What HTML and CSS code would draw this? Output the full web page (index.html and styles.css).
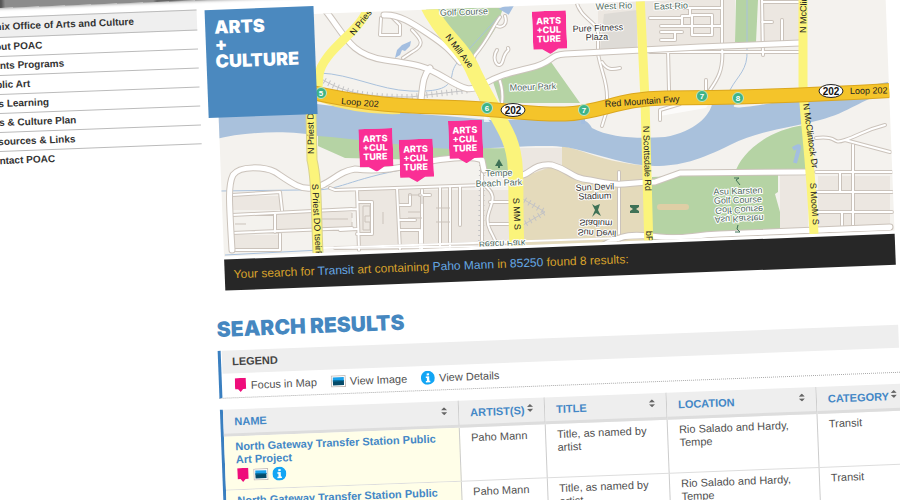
FILE: index.html
```html
<!DOCTYPE html>
<html lang="en">
<head>
<meta charset="utf-8">
<title>Arts + Culture</title>
<link rel="stylesheet" href="styles.css">
</head>
<body>
<svg class="sprite" aria-hidden="true">
  <symbol id="i-pin" viewBox="0 0 12 14"><path fill="#ef0d7b" d="M0 0H11V11H8L5.500 14 3 11H0Z"/></symbol>
  <symbol id="i-image" viewBox="0 0 15 12"><path fill="#fff" stroke="#c4bcb8" d="M.5.5h14v11H.5z"/><path fill="#1aa0ea" d="M2 2h11v4H2z"/><path fill="#064a68" d="M2 5h11v5H2z"/><path fill="#0877ab" d="M2 5h11v1H2z"/></symbol>
  <symbol id="i-info" viewBox="0 0 14 14"><circle cx="7" cy="7" r="7" fill="#12a5f4"/><path fill="#fff" d="M6 2.500h2.400v2H6zM5 5.500h3.400v4.500h1v1.500H4.900V10H6V7H5z"/></symbol>
  <symbol id="i-sort" viewBox="0 0 6 8"><path fill="#666" d="M0 3 3 0l3 3zM0 5h6L3 8z"/></symbol>
</svg>
<div class="page">
  <header class="banner"></header>
  <nav class="sidebar">
    <a class="current" href="#">Phoenix Office of Arts and Culture</a>
    <a href="#">About POAC</a>
    <a href="#">Grants Programs</a>
    <a href="#">Public Art</a>
    <a href="#">Arts Learning</a>
    <a href="#">Arts &amp; Culture Plan</a>
    <a href="#">Resources &amp; Links</a>
    <a href="#">Contact POAC</a>
  </nav>
  <main class="main">
    <section class="map">
      <svg class="map-art" viewBox="0 0 671 239" role="img" aria-label="Street map">
        <defs>
          <g id="streets">
            <path d="M325 10C345 35 350 55 385 60S425 66 445 78S470 92 484 84S505 74 530 68S548 55 565 54L700 47L800 43"/>
            <path d="M421 100C423 80 424 75 430 68M384 15C400 14 415 25 430 35S450 50 460 62"/>
            <path d="M232 250C229 200 228 185 233 175C240 165 265 167 275 172C290 182 300 190 312 188C330 186 335 172 355 169C385 173 410 165 425 162S470 155 482 160L484 170"/>
            <path d="M516 175C530 178 530 163 552 165C570 170 570 178 590 180C625 188 625 182 655 182L680 173L805 172"/>
            <path d="M600 247C630 230 640 236 660 237C685 240 690 235 720 234L890 227"/>
            <path d="M323 248L890 229" stroke-width="2"/>
          </g>
          <g id="lanes">
            <path d="M576 0C580 20 600 22 598 35V52M598 54C602 75 607 80 607 97V110L602 126M602 62C607 70 612 70 620 68M498 76C502 85 503 95 502 103"/>
            <path d="M722 0V48C724 70 717 80 710 90M668 50L669 90M650 52H800M762 0L763 55M762 22H772M763 2H800M782 20V42"/>
            <path d="M661 8H722M661 26H722M661 40H675V32H661M690 8V16H682V26M692 15H712V35H692V15M650 18H682M682 32H668"/>
            <path d="M381 18L380 35H400V25L392 17M412 30C422 40 425 45 412 52L403 58M500 17C492 28 488 40 475 55L470 68M505 16C508 25 502 28 497 26M497 50C490 60 500 72 503 60S510 52 508 48"/>
            <path d="M232 195L280 192L282 210M232 215L352 209M232 233L352 228M275 214V232M232 250L280 250V234M330 188L335 190L484 185M357 190L359 250M335 210L357 209M340 230L357 229M397 188L400 250M358 202H372V234H357M400 205H410V195M400 220H415M400 230H420V248"/>
            <path d="M422 190V249M440 188V250M430 195H420M450 188V248M460 187V225M482 168V248M484 185C505 200 480 210 490 230S500 248 490 250M490 202H516M490 224H516M335 248L510 246"/>
            <path d="M816 138C840 135 830 145 845 140S865 130 885 125M845 140L890 152M853 145V228M816 172H892M817 192H892M817 212H892M840 172V192M842 212V230"/>
            <path d="M619 172V242M660 110L680 104M660 110V120M706 90V80"/>
          </g>
        </defs>
        <g transform="translate(-214 -26) rotate(2.200)">
          <path fill="#f4f2ee" d="M200-30H920V270H200z"/>
          <path fill="#ece7e1" d="M598 0H665V48H598zM660 0H735V45H660zM760 0H800V42H760zM233 196H280V210H233zM275 212H352V230H275zM358 190H516V250H358zM234 235H280V250H234zM518 148H562V172H518zM780 176H808V232H780zM818 176H890V230H818z"/>
          <path fill="#dedbd6" d="M604 14 637 10V48L600 50z"/>
          <path fill="#e4dabb" d="M562 146C585 150 600 162 650 166V250H514L518 178C540 172 550 165 562 166z"/>
          <path fill="#b5d3a4" d="M425 8H503L499 20C492 40 475 55 462 62zM493 82 551 62 580 103H500zM736 0H758L756 42H735zM735 173C740 155 765 130 805 125L807 173zM652 177 778 172V192L775 194 780 212V232L650 240zM318 135C360 135 450 150 505 148L516 178 484 170 482 158 430 160 345 158 318 146z"/>
          <path fill="#a9c1dc" d="M205 110 317 104C380 112 430 114 490 120L570 119C578 116 588 120 592 128C610 138 640 139 665 137C695 132 710 115 712 104H735C730 109 740 108 760 105L888 82V92C860 100 850 112 820 120S760 130 730 145S680 166 655 166C630 166 600 155 575 149S520 148 450 149C400 146 360 139 318 136C290 130 240 131 205 142z"/>
          <path fill="#fff" opacity=".7" d="M484 113 490 122 484 122zM660 107 710 102 706 108 660 116z"/>
          <path class="brook" d="M320 73C350 74 380 90 410 91S450 88 452 75 460 60 500 15M747 0V50C748 70 738 75 730 90M220 191 300 190C340 192 340 182 400 170M225 255 320 250"/>
          <path fill="#a3bee0" d="M395 58 397 50 402 45 411 41 410 46 405 51 402 50 400 55z"/>
          <path class="pond" d="M503 9 512 5 508 12zM793 149Q800 144 799 148T795 163M583 119V124"/>
          <path class="rail" d="M320 78C345 94 370 97 410 97L470 90M476 90 484 110M482 165 481 250M516 195 545 212 518 228"/>
          <path class="rail rail-ties" d="M320 78C345 94 370 97 410 97L470 90M482 165 481 250M516 195 545 212 518 228"/>
          <use href="#lanes" class="lane-case"/><use href="#lanes" class="lane"/>
          <use href="#streets" class="street-case"/><use href="#streets" class="street"/>
          <path class="blocks" d="M365 206H370V216H365V222H370V230H363V206zM383 212V224M408 195H422V204M408 212H420M408 218H422M436 208H450M436 222H450M322 219H348M235 224H246M352 213V218M352 222V226"/>
          <path fill="none" d="M660 207H686" stroke="#dfcea5" stroke-width="6" stroke-linecap="round"/>
          <path class="major-case" d="M311 112 312 160C317 180 316 210 318 253"/>
          <path class="major" d="M368 6C364 30 322 50 319 75L317 100M311 112 312 160C317 180 316 210 318 253M640-5 645 100 649 250M803-5 803 85C804 120 810 150 814 234"/>
          <path class="major wide" d="M424-2C440 35 462 45 472 68S492 105 506 132 514 180 517 250"/>
          <path fill="none" stroke="#fbe470" stroke-width="6" d="M317 98C345 108 370 112 400 111"/>
          <path class="fwy-case" d="M310 92C350 101 385 106 440 107S530 115 565 114 620 98 665 98 780 97 900 90"/>
          <path class="fwy" d="M310 92C350 101 385 106 440 107S530 115 565 114 620 98 665 98 780 97 900 90"/>
          <g class="exit"><circle cx="321" cy="93" r="5.500"/><circle cx="487" cy="108" r="5.500"/><circle cx="584" cy="110" r="5.500"/><circle cx="702" cy="96" r="5.500"/><circle cx="738" cy="98" r="5.500"/></g>
          <g class="exit-no"><text x="321" y="96">5</text><text x="487" y="111">6</text><text x="584" y="113">7</text><text x="702" y="99">7</text><text x="738" y="101">8</text></g>
          <g class="shield"><ellipse cx="513" cy="110" rx="12" ry="6.500"/><ellipse cx="831" cy="91" rx="12" ry="6.500"/></g>
          <g class="shield-no"><text x="513" y="114">202</text><text x="831" y="95">202</text></g>
          <g class="road">
            <text transform="translate(341 104) rotate(5)">Loop 202</text>
            <text transform="translate(605 107) rotate(-4)">Red Mountain Fwy</text>
            <text transform="translate(850 94) rotate(-1)">Loop 202</text>
            <text transform="translate(354 36) rotate(-52)">N Pries</text>
            <text transform="translate(445 37) rotate(53)">N Mill Ave</text>
            <text transform="translate(314 154) rotate(-91)">N Priest Dr</text>
            <text transform="translate(312 184) rotate(87)">S Priest DO tseirP</text>
            <text transform="translate(513 198) rotate(87)">S MM S</text>
            <text transform="translate(643 126) rotate(88)">N Scottsdale Rd</text>
            <text transform="translate(646 231) rotate(88)">bP</text>
            <text transform="translate(806 33) rotate(-89)">N McClintock</text>
            <text transform="translate(803 104) rotate(82)">N McClintock Dr</text>
            <text transform="translate(810 183) rotate(86)">S MooM S</text>
          </g>
          <g class="place">
            <text transform="translate(464 15) rotate(-2)">Golf Course</text>
            <text transform="translate(614 9) rotate(-2)">West Rio</text>
            <text transform="translate(671 9) rotate(-2)">East Rio</text>
            <text transform="translate(533 90) rotate(-2)">Moeur Park</text>
            <g class="dark"><text transform="translate(598 31) rotate(-2)">Pure Fitness</text><text transform="translate(597 40) rotate(-2)">Plaza</text>
            <text transform="translate(595 190) rotate(-2)">Sun Devil</text><text transform="translate(595 199) rotate(-2)">Stadium</text>
            <text transform="translate(596 220) scale(1 -1) rotate(-2)">Stadium</text><text transform="translate(597 230) scale(1 -1) rotate(-2)">Sun Devil</text></g>
            <text transform="translate(499 176) rotate(-2)">Tempe</text><text transform="translate(499 186) rotate(-2)">Beach Park</text>
            <text transform="translate(502 241) scale(1 -1) rotate(2)">Beach Park</text>
            <text transform="translate(738 194) rotate(-2)">Asu Karsten</text><text transform="translate(738 203) rotate(-2)">Golf Course</text>
            <text transform="translate(739 207) scale(1 -1) rotate(2)">Golf Course</text><text transform="translate(739 216) scale(1 -1) rotate(2)">Asu Karsten</text>
          </g>
          <path fill="#3f7257" d="M499 159 495 166H498V168H500V166H503zM592 204 595 206 600 204 598 210 601 216 596 213 592 217 595 210zM630 205H639V207L636 209 639 211V213H630V211L633 209 630 207z"/>
          <path fill="none" stroke="#3f7257" d="M734 178H739L736 180 740 185M735 232H740L737 229 738 225"/>
        </g>
      </svg>
      <a class="pin pin-a" href="#">ARTS<br>+CUL<br>TURE</a>
      <a class="pin pin-b" href="#">ARTS<br>+CUL<br>TURE</a>
      <a class="pin pin-c" href="#">ARTS<br>+CUL<br>TURE</a>
      <a class="pin pin-d" href="#">ARTS<br>+CUL<br>TURE</a>
      <h1 class="badge">ARTS<br>+<br>CULTURE</h1>
    </section>
    <p class="summary">Your search for <a href="#">Transit</a> art containing <a href="#">Paho Mann</a> in <a href="#">85250</a> found 8 results:</p>
    <h2 class="heading">SEARCH RESULTS</h2>
    <section class="legend">
      <h3>LEGEND</h3>
      <ul>
        <li><svg class="pin-icon"><use href="#i-pin"/></svg>Focus in Map</li>
        <li><svg class="image-icon"><use href="#i-image"/></svg>View Image</li>
        <li><svg class="info-icon"><use href="#i-info"/></svg>View Details</li>
      </ul>
    </section>
    <table class="results">
      <colgroup><col class="c-name"><col class="c-artist"><col class="c-title"><col class="c-location"><col class="c-category"></colgroup>
      <thead><tr>
        <th><div>NAME<svg class="sort"><use href="#i-sort"/></svg></div></th>
        <th><div>ARTIST(S)<svg class="sort"><use href="#i-sort"/></svg></div></th>
        <th><div>TITLE<svg class="sort"><use href="#i-sort"/></svg></div></th>
        <th><div>LOCATION<svg class="sort"><use href="#i-sort"/></svg></div></th>
        <th><div>CATEGORY<svg class="sort"><use href="#i-sort"/></svg></div></th>
      </tr></thead>
      <tbody>
        <tr><td><a href="#">North Gateway Transfer Station Public Art Project</a><div class="actions"><svg class="pin-icon"><use href="#i-pin"/></svg><svg class="image-icon"><use href="#i-image"/></svg><svg class="info-icon"><use href="#i-info"/></svg></div></td><td>Paho Mann</td><td>Title, as named by artist</td><td>Rio Salado and Hardy, Tempe</td><td>Transit</td></tr>
        <tr><td><a href="#">North Gateway Transfer Station Public Art Project</a><div class="actions"><svg class="pin-icon"><use href="#i-pin"/></svg><svg class="image-icon"><use href="#i-image"/></svg><svg class="info-icon"><use href="#i-info"/></svg></div></td><td>Paho Mann</td><td>Title, as named by artist</td><td>Rio Salado and Hardy, Tempe</td><td>Transit</td></tr>
      </tbody>
    </table>
  </main>
</div>
</body>
</html>
```
FILE: styles.css
```css
* { box-sizing: border-box; }
html, body { height: 100%; overflow: hidden; }
body { margin: 0; background: #fff; color: #505050; font: 11px/13px "Liberation Sans", Arial, sans-serif; }
a { color: inherit; text-decoration: none; }
h1, h2, h3, p, ul { margin: 0; padding: 0; }
.sprite { position: absolute; width: 0; height: 0; }

/* The whole page is tilted anticlockwise about the window's top-left corner. */
.page {
  display: grid;
  grid-template-columns: 231px 1fr;
  grid-template-rows: 8px auto;
  column-gap: 8px;
  margin: 0 15px 0 -35px;
  transform: rotate(-2.2deg);
  transform-origin: 35px 0;
}
.banner { grid-column: 1 / -1; margin-top: -20px; background: linear-gradient(90deg, #555 36px, #8c8c8c 40px 188px, #666 192px 206px, #8c8c8c 218px); box-shadow: 0 1px 3px #aaa; }

.sidebar { margin-top: 9px; color: #333; font-size: 10px; font-weight: bold; }
.sidebar a { display: block; height: 19px; padding: 2px 0 2px 15px; border-bottom: 1px solid #bbb; }
.sidebar .current { height: 21px; padding-left: 5px; background: #efefef; border-top: 1px solid #bbb; }
.sidebar a:last-child { border-bottom: 0; }

.main { padding-top: 18px; min-width: 0; }
.map { position: relative; margin-left: 10px; }
.map-art { display: block; width: 100%; height: auto; }
.badge { position: absolute; left: -10px; top: -8px; width: 109px; height: 108px; padding: 9px; background: #4b89bf; color: #fff; font: 900 18px/17px Inter, sans-serif; }
.pin { position: absolute; width: 34px; height: 43px; padding: 5px 4px; background: #fa2f95; color: #fff; font: 800 9px/9px Inter, sans-serif; clip-path: polygon(0 0, 100% 0, 100% 38px, 25px 38px, 17px 43px, 9px 38px, 0 38px); }
.pin-a { left: 317px; top: 6px; }
.pin-b { left: 139px; top: 117px; }
.pin-c { left: 179px; top: 129px; }
.pin-d { left: 229px; top: 112px; }

.lane-case, .lane, .street-case, .street { fill: none; stroke-linecap: round; stroke-linejoin: round; }
.lane-case { stroke: #cbc3bb; stroke-width: 4px; }
.lane { stroke: #fff; stroke-width: 2px; }
.street-case { stroke: #cbc3bb; stroke-width: 7px; }
.street { stroke: #fff; stroke-width: 5px; }
.blocks { fill: none; stroke: #cbc3bb; }
.brook { fill: none; stroke: #a9c1dc; }
.pond { fill: none; stroke: #a3bee0; stroke-width: 4px; }
.rail { fill: none; stroke: #c3c3c5; }
.rail-ties { stroke-width: 6px; stroke-dasharray: 1 4; }
.major { fill: none; stroke: #fbf47b; stroke-width: 9px; }
.major-case { fill: none; stroke: #d8d28e; stroke-width: 11px; }
.wide { stroke-width: 15px; }
.fwy-case { fill: none; stroke: #dba71e; stroke-width: 15px; }
.fwy { fill: none; stroke: #f4c42a; stroke-width: 13px; }
.exit { fill: #3eb489; stroke: #c5e6c4; }
.exit-no { fill: #fff; font: bold 8px "Liberation Sans", sans-serif; text-anchor: middle; }
.shield { fill: #fff; stroke: #222; stroke-width: 1px; }
.shield-no { fill: #111; font: bold 10px "Liberation Sans", sans-serif; text-anchor: middle; }
.road { fill: #222; font: 9px "Liberation Sans", sans-serif; }
.place { fill: #4e6a5c; stroke: #fff; stroke-width: 2px; paint-order: stroke; stroke-linejoin: round; font: 9px "Liberation Sans", sans-serif; text-anchor: middle; }
.dark { fill: #333; }

.summary { margin: 3px 0 0 10px; padding: 8px 9px; background: #272727; color: #d9a32b; font-size: 12px; line-height: 15px; }
.summary a { color: #66a9e6; }
.heading { margin: 25px 0 7px; color: #4587c0; font: 900 21px/28px Inter, sans-serif; }
.legend { margin-bottom: 11px; padding-left: 1px; border-left: 3px solid #3a7fc0; border-bottom: 1px dotted #aaa; }
.legend h3 { height: 23px; padding: 5px 10px; background: #eee; color: #444; font-size: 11px; line-height: 13px; }
.legend ul { display: flex; gap: 14px; height: 24px; padding: 0 12px; list-style: none; align-items: center; }
.legend li { display: flex; align-items: center; gap: 4px; }
.pin-icon { width: 12px; height: 14px; }
.image-icon { width: 15px; height: 12px; }
.info-icon { width: 14px; height: 14px; }

.results { width: calc(100% + 12px); border-collapse: separate; border-spacing: 0; table-layout: fixed; border-left: 3px solid #3a7fc0; }
.c-name { width: 236px; }
.c-artist { width: 86px; }
.c-title { width: 122px; }
.c-location { width: 150px; }
th { height: 27px; padding: 0 11px; background: #eee; border-right: 1px solid #ccc; border-bottom: 3px solid #ddd; color: #4387c6; text-align: left; }
th div { display: flex; justify-content: space-between; align-items: center; }
.sort { flex: none; width: 6px; height: 8px; margin-bottom: 5px; }
th:last-child div { justify-content: flex-start; gap: 2px; }
td { height: 54px; padding: 4px 11px 0; vertical-align: top; border-right: 1px solid #ccc; border-bottom: 1px solid #ddd; }
td:first-child { background: #fffee8; color: #4387c6; font-weight: bold; }
.actions { display: flex; align-items: center; gap: 4px; padding: 2px 0 0 1px; }
```
